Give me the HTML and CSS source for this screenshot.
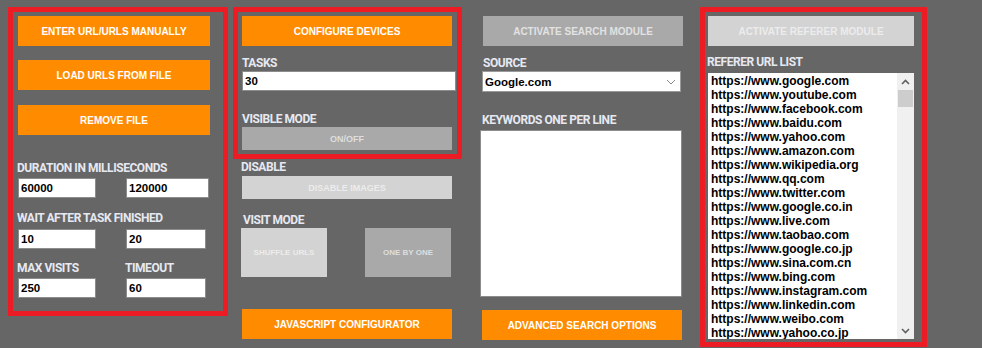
FILE: index.html
```html
<!DOCTYPE html>
<html lang="en">
<head>
  <meta charset="UTF-8" />
  <title>Traffic Bot Settings</title>
  <link rel="stylesheet" href="styles.css">
</head>
<body>
  <div class="app">

    <!-- URL source + timing -->
    <section class="panel panel-urls">
      <button class="btn btn-orange btn-wide1">ENTER URL/URLS MANUALLY</button>
      <button class="btn btn-orange btn-wide1 gap-14">LOAD URLS FROM FILE</button>
      <button class="btn btn-orange btn-wide1 gap-15">REMOVE FILE</button>

      <div class="pair pair-first">
        <label class="lbl span">DURATION IN MILLISECONDS</label>
        <input class="field w78" value="60000">
        <input class="field w83" value="120000">
      </div>
      <div class="pair pair-next">
        <label class="lbl span">WAIT AFTER TASK FINISHED</label>
        <input class="field w78" value="10">
        <input class="field w80" value="20">
      </div>
      <div class="pair pair-last">
        <label class="lbl">MAX VISITS</label>
        <label class="lbl lbl-right">TIMEOUT</label>
        <input class="field w78" value="250">
        <input class="field w80" value="60">
      </div>
    </section>

    <!-- devices -->
    <div class="col col-devices">
      <section class="panel panel-devices">
        <button class="btn btn-orange btn-wide2">CONFIGURE DEVICES</button>
        <label class="lbl lbl-tasks">TASKS</label>
        <input class="field field-tasks" value="30">
        <label class="lbl lbl-visible">VISIBLE MODE</label>
        <button class="btn btn-gray btn-wide2 btn-small">ON/OFF</button>
      </section>

      <label class="lbl lbl-disable">DISABLE</label>
      <button class="btn btn-light btn-wide2 btn-small btn-disable">DISABLE IMAGES</button>

      <label class="lbl lbl-visit">VISIT MODE</label>
      <div class="visit-modes">
        <button class="btn btn-light btn-mode">SHUFFLE URLS</button>
        <button class="btn btn-gray btn-mode">ONE BY ONE</button>
      </div>

      <button class="btn btn-orange btn-wide2 btn-js">JAVASCRIPT CONFIGURATOR</button>
    </div>

    <!-- search module -->
    <div class="col col-search">
      <button class="btn btn-gray btn-search">ACTIVATE SEARCH MODULE</button>
      <label class="lbl lbl-source">SOURCE</label>
      <div class="select">
        <span>Google.com</span>
        <svg width="10" height="6" viewBox="0 0 10 6"><path d="M1 1l4 4 4-4" fill="none" stroke="#8a8a8a" stroke-width="1"/></svg>
      </div>
      <label class="lbl lbl-keywords">KEYWORDS ONE PER LINE</label>
      <textarea class="keywords"></textarea>
      <button class="btn btn-orange btn-advanced">ADVANCED SEARCH OPTIONS</button>
    </div>

    <!-- referer module -->
    <section class="panel panel-referer">
      <button class="btn btn-light btn-referer">ACTIVATE REFERER MODULE</button>
      <label class="lbl lbl-referer">REFERER URL LIST</label>
      <div class="listbox">
        <ul class="url-list">
          <li>https://www.google.com</li>
          <li>https://www.youtube.com</li>
          <li>https://www.facebook.com</li>
          <li>https://www.baidu.com</li>
          <li>https://www.yahoo.com</li>
          <li>https://www.amazon.com</li>
          <li>https://www.wikipedia.org</li>
          <li>https://www.qq.com</li>
          <li>https://www.twitter.com</li>
          <li>https://www.google.co.in</li>
          <li>https://www.live.com</li>
          <li>https://www.taobao.com</li>
          <li>https://www.google.co.jp</li>
          <li>https://www.sina.com.cn</li>
          <li>https://www.bing.com</li>
          <li>https://www.instagram.com</li>
          <li>https://www.linkedin.com</li>
          <li>https://www.weibo.com</li>
          <li>https://www.yahoo.co.jp</li>
        </ul>
        <div class="scrollbar">
          <div class="arrow">
            <svg width="9" height="6" viewBox="0 0 9 6"><path d="M1 5l3.5-3.5L8 5" fill="none" stroke="#606060" stroke-width="1.6"/></svg>
          </div>
          <div class="thumb"></div>
          <div class="track"></div>
          <div class="arrow">
            <svg width="9" height="6" viewBox="0 0 9 6"><path d="M1 1l3.5 3.5L8 1" fill="none" stroke="#606060" stroke-width="1.6"/></svg>
          </div>
        </div>
      </div>
    </section>

  </div>
</body>
</html>
```

FILE: styles.css
```css
* {
  margin: 0;
  padding: 0;
  box-sizing: border-box;
}

body {
  background: #666666;
  font-family: 'Liberation Sans', Arial, sans-serif;
  overflow: hidden;
}

.app {
  display: flex;
  align-items: flex-start;
  height: 348px;
  padding: 7px 0 0 8px;
}

/* red framed panels */
.panel {
  border: 5px solid #ed1c24;
  display: flex;
  flex-direction: column;
  align-items: flex-start;
}

.panel-urls {
  width: 220px;
  height: 309px;
  padding: 4px 0 0 5px;
}

.col {
  display: flex;
  flex-direction: column;
  align-items: flex-start;
}

.col-devices {
  width: 229px;
  margin-left: 5px;
}

.panel-devices {
  width: 229px;
  padding: 4px 0 4px 4px;
}

.col-search {
  width: 203px;
  margin-left: 18px;
  padding-top: 9px;
}

.panel-referer {
  width: 227px;
  height: 340px;
  margin-left: 17px;
  padding: 4px 0 0 3px;
}

/* labels (narrow bold caps) */
.lbl {
  display: block;
  font-family: Roboto, 'Liberation Sans', sans-serif;
  font-weight: bold;
  font-size: 12px;
  letter-spacing: -0.45px;
  line-height: 14px;
  color: #e6e9f1;
  white-space: nowrap;
}

/* buttons */
.btn {
  border: none;
  font-family: 'Liberation Sans', Arial, sans-serif;
  font-weight: bold;
  font-size: 10px;
  height: 30px;
  display: flex;
  align-items: center;
  justify-content: center;
}

.btn-orange {
  background: #ff8c00;
  color: #ffffff;
}

.btn-gray {
  background: #a9a9a9;
  color: #dedede;
}

.btn-light {
  background: #d3d3d3;
  color: #ececec;
}

.btn-small {
  height: 23px;
  font-size: 9px;
}

.btn-wide1 { width: 192px; }
.btn-wide2 { width: 210px; }
.gap-14 { margin-top: 14px; }
.gap-15 { margin-top: 15px; }

/* input pairs in the first panel */
.pair {
  display: grid;
  grid-template-columns: 108px 1fr;
  align-items: start;
}

.pair .span {
  grid-column: 1 / -1;
  margin-bottom: 3px;
  margin-left: -1px;
}

.pair-first { margin-top: 26px; }
.pair-next { margin-top: 13px; }
.pair-next .span { margin-bottom: 4px; }
.pair-last { margin-top: 12px; }
.pair-last .lbl { margin-bottom: 3px; margin-left: -1px; }

.field {
  height: 20px;
  border: 1px solid #8c8c8c;
  background: #ffffff;
  font-family: 'Liberation Sans', Arial, sans-serif;
  font-weight: bold;
  font-size: 11.5px;
  color: #000000;
  padding: 0 2px;
  outline: none;
}

.w78 { width: 78px; }
.w80 { width: 80px; }
.w83 { width: 83px; }

/* devices column */
.lbl-tasks { margin-top: 10px; }

.field-tasks {
  width: 214px;
  margin-top: 1px;
}

.lbl-visible { margin-top: 21px; margin-bottom: 1px; }

.lbl-disable { margin: 1px 0 2px 8px; }
.btn-disable { margin-left: 9px; }

.lbl-visit { margin: 14px 0 1px 10px; }

.visit-modes {
  display: flex;
  gap: 38px;
  margin-left: 8px;
}

.btn-mode {
  width: 86px;
  height: 49px;
  font-size: 8px;
}

.btn-js {
  margin: 32px 0 0 9px;
}

/* search column */
.btn-search {
  width: 200px;
  margin-left: 3px;
  color: #e2e2e2;
}

.lbl-source { margin: 10px 0 1px 3px; }

.select {
  width: 199px;
  height: 21px;
  margin-left: 2px;
  background: #ffffff;
  border: 1px solid #9a9a9a;
  display: flex;
  align-items: center;
  justify-content: space-between;
  padding: 0 4px 0 2px;
  font-weight: bold;
  font-size: 11.5px;
  color: #000000;
}

.lbl-keywords { margin: 21px 0 3px 2px; }

.keywords {
  width: 202px;
  height: 167px;
  border: 1px solid #8c8c8c;
  background: #ffffff;
  resize: none;
  outline: none;
}

.btn-advanced {
  width: 200px;
  margin: 13px 0 0 2px;
}

/* referer panel */
.btn-referer {
  width: 206px;
}

.lbl-referer { margin: 9px 0 4px -1px; }

.listbox {
  width: 206px;
  height: 266px;
  background: #ffffff;
  display: flex;
}

.url-list {
  flex: 1;
  list-style: none;
  padding: 1px 0 0 3px;
  overflow: hidden;
  font-weight: bold;
  font-size: 12px;
  line-height: 14px;
  color: #000000;
  white-space: nowrap;
}

.scrollbar {
  width: 17px;
  background: #f0f0f0;
  display: flex;
  flex-direction: column;
}

.scrollbar .arrow {
  height: 17px;
  display: flex;
  align-items: center;
  justify-content: center;
}

.scrollbar .thumb {
  height: 17px;
  margin: 0 1px;
  background: #cdcdcd;
}

.scrollbar .track {
  flex: 1;
}
```
